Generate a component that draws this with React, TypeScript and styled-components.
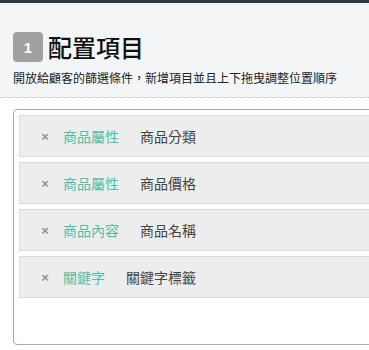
import styled, { createGlobalStyle } from "styled-components";

const GlobalStyle = createGlobalStyle`
  body {
    margin: 0;
    background: #fff;
    font-family: "Noto Sans CJK TC", "Noto Sans", sans-serif;
  }
`;

const Page = styled.div`
  width: 100%;
  overflow: hidden;
`;

const TopBar = styled.div`
  height: 3px;
  background: #2b3848;
`;

const Header = styled.div`
  background: #f4f5f7;
  padding: 29px 13px 10px;
  border-bottom: 1px dotted #c4c4c4;
`;

const TitleRow = styled.div`
  display: flex;
  align-items: center;
  gap: 5px;
  height: 30px;
`;

const StepBadge = styled.span`
  width: 30px;
  height: 30px;
  border-radius: 4px;
  background: #a0a0a0;
  color: #fff;
  font-family: "Liberation Sans", Arial, sans-serif;
  font-size: 15px;
  font-weight: 700;
  display: flex;
  align-items: center;
  justify-content: center;
`;

const Title = styled.h2`
  margin: 0;
  font-size: 24px;
  font-weight: 500;
  color: #111;
  line-height: 30px;
`;

const Subtitle = styled.p`
  margin: 7px 0 0;
  font-size: 12px;
  line-height: 18px;
  color: #222;
  white-space: nowrap;
`;

const ListBox = styled.div`
  margin: 11px 0 6px 13px;
  width: calc(100% + 40px);
  min-height: 235px;
  box-sizing: border-box;
  border: 1px solid #a9a9a9;
  border-radius: 4px;
  padding: 5px 5px 46px;
  display: flex;
  flex-direction: column;
  gap: 5px;
`;

const Item = styled.div`
  height: 42px;
  box-sizing: border-box;
  background: #ededed;
  border: 1px solid #dcdcdc;
  display: flex;
  align-items: center;
  padding-left: 21px;
  font-size: 14px;
`;

const Remove = styled.span`
  color: #8b929c;
  font-family: "Liberation Sans", Arial, sans-serif;
  font-size: 13px;
  font-weight: 700;
  width: 8px;
  margin-right: 14px;
  text-align: center;
`;

const Category = styled.span`
  color: #4fc0a7;
  margin-right: 21px;
`;

const Label = styled.span`
  color: #444;
`;

const items = [
  { category: "商品屬性", label: "商品分類" },
  { category: "商品屬性", label: "商品價格" },
  { category: "商品內容", label: "商品名稱" },
  { category: "關鍵字", label: "關鍵字標籤" },
];

export default function App() {
  return (
    <Page>
      <GlobalStyle />
      <TopBar />
      <Header>
        <TitleRow>
          <StepBadge>1</StepBadge>
          <Title>配置項目</Title>
        </TitleRow>
        <Subtitle>開放給顧客的篩選條件，新增項目並且上下拖曳調整位置順序</Subtitle>
      </Header>
      <ListBox>
        {items.map((it, i) => (
          <Item key={i}>
            <Remove>×</Remove>
            <Category>{it.category}</Category>
            <Label>{it.label}</Label>
          </Item>
        ))}
      </ListBox>
    </Page>
  );
}
